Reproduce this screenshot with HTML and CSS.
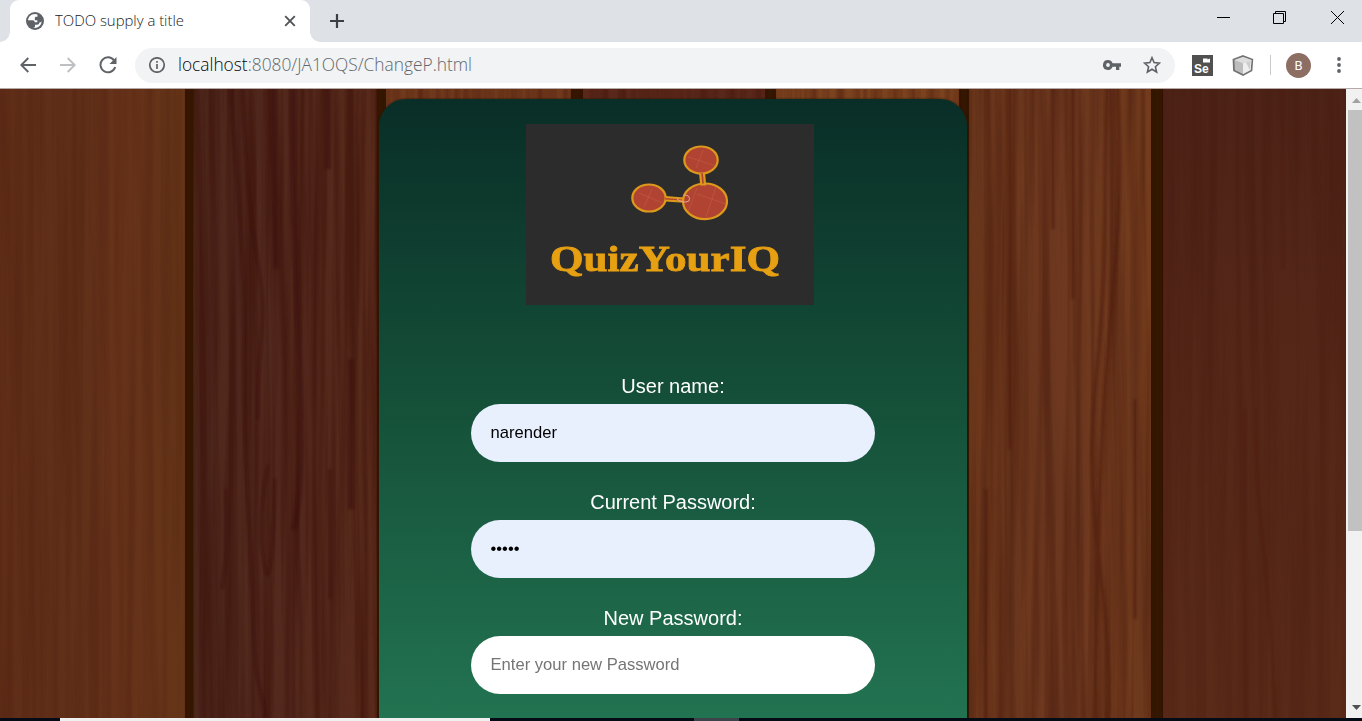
FILE: index.html
```html
<!DOCTYPE html>
<html lang="en">
<head>
<meta charset="utf-8">
<title>TODO supply a title</title>
<link rel="stylesheet" href="styles.css">
</head>
<body>
<div class="browser">
  <header class="tabstrip">
    <div class="tab-edge"></div>
    <div class="tab">
      <svg class="globe" width="18" height="18" viewBox="0 0 18 18"><circle cx="9" cy="9" r="9" fill="#5f6368"/><path d="M9 2C5 2 2.200 5 2 8.300H6.500C8 8.300 8.700 9 8.700 10.300H11.300V8.200H8.800V6.300C8.800 5.400 9.400 4.800 10.300 4.800H11.500V2.500A7 7 0 0 0 9 2ZM15.700 8.600C15.500 10 14.500 10.600 13.300 10.600 13.300 12 12.500 12.800 11 12.800H9V14.300C9 15.100 8.500 15.600 7.700 15.600L7.500 15.800A7 7 0 0 0 15.700 8.600Z" fill="#fff"/></svg>
      <svg class="tab-title" width="140" height="22"><text x="0" y="16" textLength="129" lengthAdjust="spacingAndGlyphs">TODO supply a title</text></svg>
      <svg class="tab-close" width="12" height="12" viewBox="0 0 12 12"><path d="M1.200 1.200 10.800 10.800M10.800 1.200 1.200 10.800" stroke="#50545a" stroke-width="1.900"/></svg>
    </div>
    <div class="tab-edge tab-edge-right"></div>
    <svg class="new-tab" width="16" height="16" viewBox="0 0 16 16"><path d="M8 1V15M1 8H15" stroke="#3c4043" stroke-width="2.200"/></svg>
    <div class="window-buttons">
      <svg width="13" height="13" viewBox="0 0 13 13"><path d="M0 6.500H13" stroke="#000"/></svg>
      <svg width="13" height="13" viewBox="0 0 13 13"><path d="M.5 2.500H10.500V12.500H.5ZM2.500 2.500V.5H12.500V10.500H10.500" fill="none" stroke="#000"/></svg>
      <svg width="13" height="13" viewBox="0 0 13 13"><path d="M0 0 13 13M13 0 0 13" stroke="#000"/></svg>
    </div>
  </header>
  <div class="toolbar">
    <svg class="back" width="16" height="16" viewBox="0 0 16 16"><path d="M16 8H1.500M8.300 1 1.300 8 8.300 15" fill="none" stroke="#5f6368" stroke-width="1.900"/></svg>
    <svg class="forward" width="16" height="16" viewBox="0 0 16 16"><path d="M0 8H14.500M7.700 1 14.700 8 7.700 15" fill="none" stroke="#bdc0c3" stroke-width="1.900"/></svg>
    <svg class="reload" width="18" height="18" viewBox="0 0 18 18"><path d="M15 4.300A7.500 7.500 0 1 0 16.200 11" fill="none" stroke="#5f6368" stroke-width="2"/><path d="M17.500 1V8H10.500Z" fill="#5f6368"/></svg>
    <div class="omnibox">
      <svg width="16" height="16" viewBox="0 0 16 16"><circle cx="8" cy="8" r="7.200" fill="none" stroke="#5f6368" stroke-width="1.700"/><path d="M8 7V12M8 4V5.700" stroke="#5f6368" stroke-width="1.700"/></svg>
      <svg class="url" width="420" height="30"><text x="0" y="21" textLength="294" lengthAdjust="spacingAndGlyphs"><tspan class="host">localhost</tspan>:8080/JA1OQS/ChangeP.html</text></svg>
      <svg class="key" width="18" height="10" viewBox="0 0 18 10"><path d="M5 0A5 5 0 1 0 9.600 6.800H13V10H16.300V6.800H18V3.200H9.600A5 5 0 0 0 5 0ZM5 3.100A1.900 1.900 0 1 1 5 6.900 1.900 1.900 0 0 1 5 3.100Z" fill="#5f6368" fill-rule="evenodd"/></svg>
      <svg class="star" width="18" height="18" viewBox="0 0 18 18"><path d="M9 1.700 11.100 6.600 16.500 7.100 12.400 10.700 13.600 16 9 13.200 4.400 16 5.600 10.700 1.500 7.100 6.900 6.600Z" fill="none" stroke="#5f6368" stroke-width="1.600"/></svg>
    </div>
    <svg class="selenium" width="21" height="21" viewBox="0 0 21 21"><path d="M0 0H21V21H0Z" fill="#505050"/><path d="M11 3.500H15.500V4.500L18 3.500V7.500H11Z" fill="#fff"/><text x="2" y="18">Se</text></svg>
    <svg class="cube" width="22" height="21" viewBox="0 0 22 21"><path d="M11 1 20.300 4.500 19.500 15.500 11 20 2 15.500 1.500 4.500Z" fill="#bdbdbd" stroke="#737373" stroke-width="1.800"/><path d="M2.500 5 11 2 19.500 5 11 8.300Z" fill="#ddd"/><path d="M11 8.300 19.500 5 18.700 15 11 19Z" fill="#eee"/><path d="M14 7.500 18.500 5.700 18 15Z" fill="#ccc"/></svg>
    <span class="divider"></span>
    <span class="avatar">B</span>
    <svg class="menu" width="4" height="16" viewBox="0 0 4 16"><g fill="#5f6368"><circle cx="2" cy="2" r="1.900"/><circle cx="2" cy="8" r="1.900"/><circle cx="2" cy="14" r="1.900"/></g></svg>
  </div>
  <div class="viewport">
    <main class="page">
      <svg class="wood" width="1346" height="629" viewBox="0 0 1346 629">
        <defs>
          <filter id="grain" x="0" y="0" width="100%" height="100%" color-interpolation-filters="sRGB"><feTurbulence type="fractalNoise" baseFrequency=".11 .0025" numOctaves="3" seed="7"/><feColorMatrix values="0 0 0 0 .23  0 0 0 0 .06  0 0 0 0 .03  3 0 0 0 -1.150"/></filter>
          <filter id="sheen" x="0" y="0" width="100%" height="100%" color-interpolation-filters="sRGB"><feTurbulence type="fractalNoise" baseFrequency=".07 .003" numOctaves="3" seed="22"/><feColorMatrix values="0 0 0 0 .36  0 0 0 0 .2  0 0 0 0 .13  0 3 0 0 -1.200"/></filter>
          <filter id="soft"><feGaussianBlur stdDeviation="1.200"/></filter>
          <linearGradient id="p1"><stop stop-color="#602e18"/><stop offset=".45" stop-color="#613019"/><stop offset=".6" stop-color="#66321a"/><stop offset="1" stop-color="#653518"/></linearGradient>
          <linearGradient id="p2"><stop stop-color="#4b251b"/><stop offset=".5" stop-color="#52281d"/><stop offset="1" stop-color="#582a1b"/></linearGradient>
          <linearGradient id="p6"><stop stop-color="#6c371b"/><stop offset=".5" stop-color="#6d381f"/><stop offset="1" stop-color="#733c1d"/></linearGradient>
          <linearGradient id="p7" x2="0" y2="1"><stop stop-color="#4e2317"/><stop offset="1" stop-color="#5b2b19"/></linearGradient>
        </defs>
        <path fill="#341500" d="M0 0H1346V629H0Z"/>
        <path fill="url(#p1)" d="M0 0H185V629H0Z"/>
        <path fill="url(#p2)" d="M193 0H377V629H193Z"/>
        <path fill="#70391c" d="M386 0H571V629H386Z"/>
        <path fill="#5a281a" d="M583 0H765V629H583Z"/>
        <path fill="#7b421e" d="M776 0H959V629H776Z"/>
        <path fill="url(#p6)" d="M969 0H1151V629H969Z"/>
        <path fill="url(#p7)" d="M1163 0H1346V629H1163Z"/>
        <g opacity=".28"><rect x="193" width="184" height="629" filter="url(#sheen)"/><rect x="969" width="182" height="629" filter="url(#sheen)"/></g>
        <g opacity=".17"><rect width="184" height="629" filter="url(#grain)"/><rect x="1163" width="183" height="629" filter="url(#grain)"/></g>
        <g opacity=".55"><rect x="193" width="184" height="629" filter="url(#grain)"/></g>
        <g opacity=".33"><rect x="386" width="765" height="629" filter="url(#grain)"/></g>
        <g fill="none" stroke="#370d08" stroke-width="2.500" opacity=".55" filter="url(#soft)">
          <path d="M231 0C234 65 245 150 244 260S250 420 253 520 262 590 265 629M242 0C246 60 247 110 258 175S256 260 258 330"/>
          <path d="M273 -20 276 180M293 -20Q293 100 299 250T294 440M328 -20V80M351 270V420" stroke-width="5"/>
          <path d="M268 376Q257 430 264 474T275 390M226 400Q230 450 222 500M330 380V510"/>
        </g>
        <g fill="none" stroke="#4d1d0c" stroke-width="3.500" opacity=".55" filter="url(#soft)">
          <path d="M1108 -20Q1105 60 1105 130T1096 290 1100 480 1107 650M1117 -20Q1122 90 1117 150T1105 300 1094 650"/>
          <path d="M1073 -20V210M1053 -20V140M1010 -20V360M986 400V650M1135 310V530"/>
          <path d="M1256 320Q1256 400 1263 455T1276 650M1245 320V650M1283 -20V180" stroke-width="1.500"/>
        </g>
        <path d="M186 -9H192.500V640H186ZM377.500 -9H384V640H377.500ZM572 -9H581V640H572ZM766 -9H774V640H766ZM960 -9H968V640H960ZM1153 -9H1161.500V640H1153Z" fill="#341500" filter="url(#soft)"/>
      </svg>
      <form class="panel">
        <svg class="logo" width="288" height="181" viewBox="0 0 288 181">
          <path fill="#2c2c2c" d="M0 0H288V181H0Z"/>
          <g fill="#b04331" stroke="#dc991c" stroke-width="2.200">
            <ellipse cx="175" cy="36" rx="16.700" ry="13.500"/><ellipse cx="123" cy="74" rx="16.700" ry="13.500"/><ellipse cx="179" cy="77.300" rx="22" ry="17.800"/>
            <path d="M139.500 73 157 74.500V77.500L139 76.500M174.200 49.500 175.200 60.500H179L178 49"/>
          </g>
          <g fill="none" stroke="#c66a50" stroke-width=".6" opacity=".7"><path d="M170 44 177 26M162 33 190 42M118 83 126 65M113 69 136 79M162 88 171 64M171 70 200 80M180 93 190 63"/></g>
          <path d="M151 75Q157 80 163 77M158 71Q165 71 163 77" fill="none" stroke="#e7a295" stroke-width="1"/>
          <text class="brand" x="24" y="147" textLength="230" lengthAdjust="spacingAndGlyphs">QuizYourIQ</text>
        </svg>
        <div class="fields">
          <div class="field"><label for="user">User name:</label><input class="filled" id="user" type="text" value="narender"></div>
          <div class="field"><label for="current">Current Password:</label><input class="filled" id="current" type="password" value="abcde"></div>
          <div class="field"><label for="next">New Password:</label><input id="next" type="password" placeholder="Enter your new Password"></div>
        </div>
      </form>
    </main>
    <aside class="scrollbar">
      <svg width="16" height="21" viewBox="0 0 16 21"><path d="M6 14H15L10.500 9Z" fill="#a3a3a3"/></svg>
      <div class="thumb"></div>
      <svg class="down" width="16" height="21" viewBox="0 0 16 21"><path d="M6 8H15L10.500 13Z" fill="#505050"/></svg>
    </aside>
  </div>
  <footer class="taskbar"><span class="search"></span><span class="active-app"></span></footer>
</div>
</body>
</html>
```
FILE: styles.css
```css
* { box-sizing: border-box; }
body { margin: 0; overflow: hidden; font-family: "Liberation Sans", Arial, sans-serif; }
svg { display: block; flex: none; }
.browser { width: 1362px; height: 721px; display: flex; flex-direction: column; overflow: hidden; background: #fff; }
.tabstrip { height: 42px; flex: none; display: flex; align-items: center; background: #dee1e6; }
.tab-edge { width: 10px; height: 42px; background: radial-gradient(circle at 0 0, transparent 9.500px, #fff 10px) bottom / 10px 10px no-repeat; }
.tab-edge-right { transform: scaleX(-1); }
.tab { width: 300px; height: 42px; display: flex; align-items: center; padding: 0 14px 0 16px; border-radius: 9px 9px 0 0; background: #fff; }
.tab-title { margin-left: 11px; font: 300 14.500px "Open Sans", "Noto Sans", sans-serif; fill: #202327; }
.tab-close { margin-left: auto; }
.new-tab { margin-left: 9px; }
.window-buttons { display: flex; gap: 43px; margin: 0 18px 7px auto; }
.window-buttons svg:last-child { margin-left: 2px; }
.toolbar { height: 47px; flex: none; display: flex; align-items: center; padding: 0 21px 0 20px; border-bottom: 1px solid #b5aaa7; }
.forward { margin-left: 24px; }
.reload { margin-left: 23px; }
.omnibox { width: 1040px; height: 35px; display: flex; align-items: center; margin-left: 18px; padding: 0 14px; border-radius: 18px; background: #f1f3f4; }
.url { margin-left: 13px; font: 300 18px "Open Sans", "Noto Sans", sans-serif; fill: #62676c; }
.url .host { fill: #050608; }
.key { margin-left: auto; }
.star { margin-left: 22px; }
.selenium { margin-left: 17px; font: bold 12px "Liberation Sans", sans-serif; fill: #fff; }
.cube { margin-left: 19px; }
.divider { width: 1px; height: 20px; margin-left: 16px; background: #c8cacd; }
.avatar { width: 25px; height: 25px; margin-left: 15px; border-radius: 50%; background: #8d6e63; color: #fff; font: 13px/25px Roboto, sans-serif; text-align: center; }
.menu { margin-left: auto; }
.viewport { height: 629px; flex: none; display: flex; overflow: hidden; }
.page { position: relative; width: 1346px; height: 629px; padding: 10px 0 0 379px; overflow: hidden; }
.wood { position: absolute; inset: 0; }
.panel { position: relative; width: 588px; height: 850px; padding-top: 25px; border-radius: 27px; background: linear-gradient(#092e28 0, #0a3028 20px, #155039 306px, #227351 619px); box-shadow: 0 0 2px #241307; }
.logo { margin-left: 147px; }
.brand { font: bold 36px "Liberation Serif", serif; fill: #e6a012; stroke: #e6a012; stroke-width: .8px; }
.fields { display: flex; flex-direction: column; gap: 28px; margin-top: 69px; }
.field { display: flex; flex-direction: column; align-items: center; }
label { height: 30px; line-height: 24px; font-size: 20px; color: #fff; }
input { width: 404px; height: 58px; padding: 0 19px 0 19.500px; border: 0; border-radius: 29px; background: #fff; color: #000; font: 16.600px "Liberation Sans", Arial, sans-serif; }
.filled { background: #e8f0fe; }
input::placeholder { color: #757575; }
.scrollbar { width: 16px; height: 629px; display: flex; flex-direction: column; background: #f1f1f1; }
.thumb { width: 14px; height: 421px; margin-left: 2px; background: #c1c1c1; }
.down { margin-top: auto; }
.taskbar { height: 3px; flex: none; display: flex; background: #030b16; }
.search { width: 430px; margin-left: 60px; background: #f1f0f0; }
.active-app { width: 45px; margin-left: 204px; background: #3b434b; }
```
